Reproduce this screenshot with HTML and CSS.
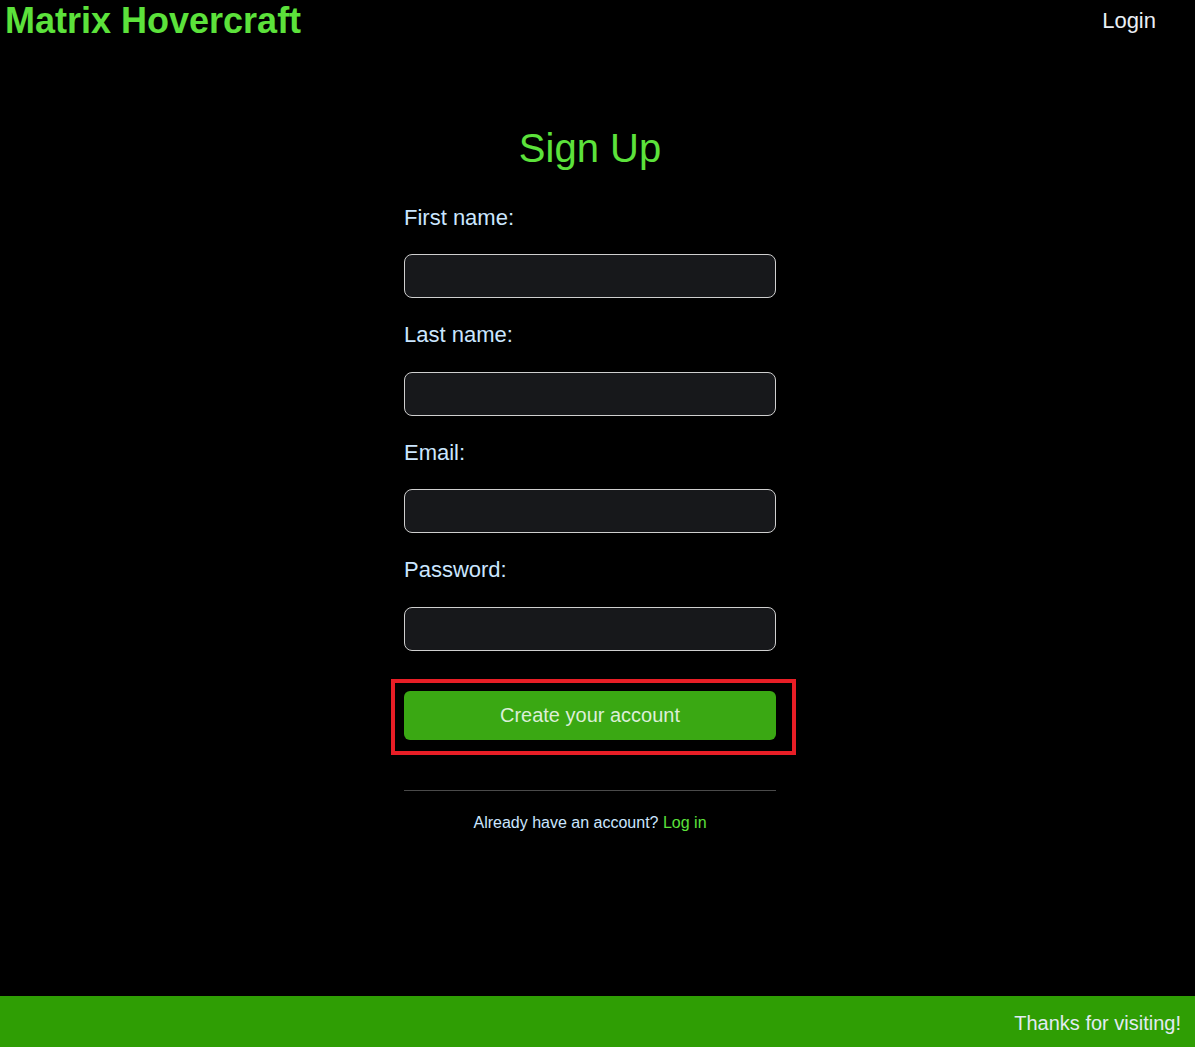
FILE: index.html
```html
<!DOCTYPE html>
<html lang="en">
<head>
<meta charset="utf-8">
<title>Sign Up - Matrix Hovercraft</title>
<link rel="stylesheet" href="styles.css">
</head>
<body>
<header class="site-header">
  <div class="brand">Matrix Hovercraft</div>
  <a class="nav-login" href="#">Login</a>
</header>
<main class="main">
  <h1 class="page-title">Sign Up</h1>
  <form class="signup-form">
    <label class="field-label" for="first">First name:</label>
    <input class="field-input" id="first" type="text">
    <label class="field-label" for="last">Last name:</label>
    <input class="field-input" id="last" type="text">
    <label class="field-label" for="email">Email:</label>
    <input class="field-input" id="email" type="email">
    <label class="field-label" for="pw">Password:</label>
    <input class="field-input" id="pw" type="password">
    <div class="submit-wrap">
      <button class="submit-btn" type="button">Create your account</button>
      <span class="highlight-box"></span>
    </div>
    <hr class="divider">
    <p class="login-hint">Already have an account? <a class="login-link" href="#">Log in</a></p>
  </form>
</main>
<footer class="site-footer">Thanks for visiting!</footer>
</body>
</html>
```
FILE: styles.css
```css
* { box-sizing: border-box; }
html, body { margin: 0; padding: 0; }
body {
  background: #000;
  font-family: "Liberation Sans", Arial, sans-serif;
  min-height: 100vh;
  display: flex;
  flex-direction: column;
}
.site-header {
  display: flex;
  align-items: center;
  justify-content: space-between;
  padding: 0 39px 0 5px;
}
.brand {
  color: #5ce23b;
  font-weight: bold;
  font-size: 36px;
}
.nav-login {
  color: #e9eef4;
  font-size: 22px;
  text-decoration: none;
}
.main {
  display: flex;
  flex-direction: column;
  align-items: center;
  padding-right: 15px;
}
.page-title {
  margin: 83px 0 0;
  color: #5ce23b;
  font-size: 40px;
  font-weight: normal;
  line-height: 46px;
}
.signup-form {
  width: 372px;
  margin-top: 33.6px;
  display: flex;
  flex-direction: column;
}
.field-label {
  display: block;
  color: #cbe6ff;
  font-size: 22px;
  line-height: 25.6px;
  margin-bottom: 24px;
}
.field-input {
  display: block;
  width: 100%;
  height: 44px;
  margin: 0 0 24px;
  background: #17181b;
  border: 1px solid #cfcfcf;
  border-radius: 8px;
  outline: none;
}
.submit-wrap {
  position: relative;
  margin-top: 16px;
}
.submit-btn {
  display: block;
  width: 100%;
  height: 49px;
  border: none;
  border-radius: 6px;
  background: #3aa813;
  color: #dcefd8;
  font-family: "Liberation Sans", Arial, sans-serif;
  font-size: 20px;
  padding-top: 2px;
}
.highlight-box {
  position: absolute;
  top: -12px;
  left: -13px;
  right: -20px;
  bottom: -15px;
  border: 4px solid #e81e26;
  pointer-events: none;
}
.divider {
  width: 100%;
  margin: 50px 0 0;
  border: none;
  border-top: 1px solid #4a4a4a;
}
.login-hint {
  margin: 23px 0 0;
  text-align: center;
  color: #cbe6ff;
  font-size: 16px;
  line-height: 18px;
}
.login-link {
  color: #5ce23b;
  text-decoration: none;
}
.site-footer {
  margin-top: auto;
  height: 51px;
  background: #2f9e04;
  color: #e2ebf2;
  font-size: 20px;
  display: flex;
  align-items: center;
  justify-content: flex-end;
  padding: 3px 14px 0 0;
}
```
